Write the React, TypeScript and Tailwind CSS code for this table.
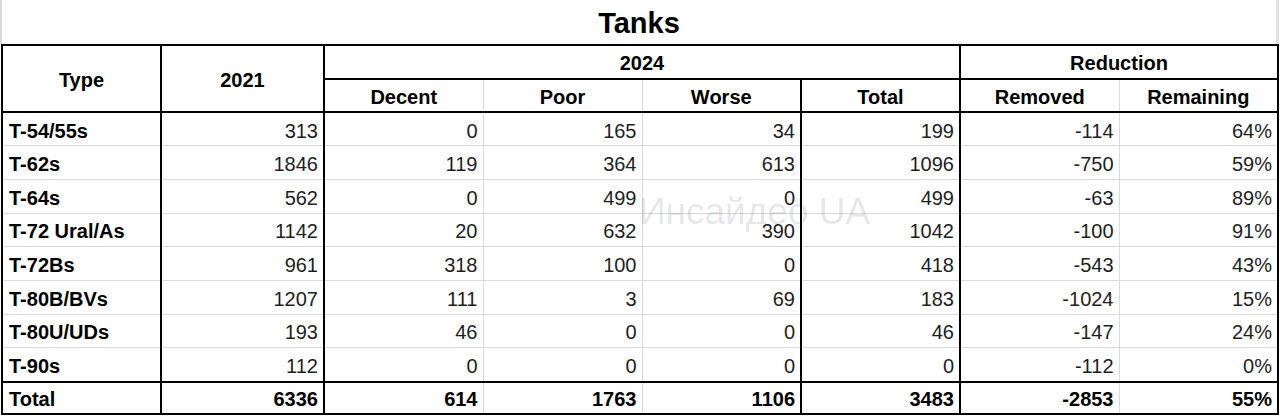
import React from 'react'

type Row = { type: string; y2021: number; decent: number; poor: number; worse: number; total: number; removed: number; remaining: string }

const rows: Row[] = [
  { type: 'T-54/55s', y2021: 313, decent: 0, poor: 165, worse: 34, total: 199, removed: -114, remaining: '64%' },
  { type: 'T-62s', y2021: 1846, decent: 119, poor: 364, worse: 613, total: 1096, removed: -750, remaining: '59%' },
  { type: 'T-64s', y2021: 562, decent: 0, poor: 499, worse: 0, total: 499, removed: -63, remaining: '89%' },
  { type: 'T-72 Ural/As', y2021: 1142, decent: 20, poor: 632, worse: 390, total: 1042, removed: -100, remaining: '91%' },
  { type: 'T-72Bs', y2021: 961, decent: 318, poor: 100, worse: 0, total: 418, removed: -543, remaining: '43%' },
  { type: 'T-80B/BVs', y2021: 1207, decent: 111, poor: 3, worse: 69, total: 183, removed: -1024, remaining: '15%' },
  { type: 'T-80U/UDs', y2021: 193, decent: 46, poor: 0, worse: 0, total: 46, removed: -147, remaining: '24%' },
  { type: 'T-90s', y2021: 112, decent: 0, poor: 0, worse: 0, total: 0, removed: -112, remaining: '0%' },
]

const thick = 'border-r-2 border-r-black'
const thin = 'border-r border-r-[#dadada]'

export default function App() {
  return (
    <div className="relative w-[1280px] h-[416px] bg-white overflow-hidden" style={{ fontFamily: '"Liberation Sans", Arial, sans-serif' }}>
      {/* Title */}
      <div className="h-[44px] flex justify-center border-l-[2px] border-l-[#d6d6d6] border-r-[3px] border-r-[#e2e2e2] mr-[1px]">
        <h1 className="text-[29px] font-bold leading-[44px] pt-[1px] text-black">Tanks</h1>
      </div>

      <table className="ml-[1px] w-[1276px] table-fixed border-collapse text-[20px] leading-[23px]">
        <colgroup>
          <col className="w-[159px]" />
          <col className="w-[163px]" />
          <col className="w-[159px]" />
          <col className="w-[159px]" />
          <col className="w-[159px]" />
          <col className="w-[159px]" />
          <col className="w-[159px]" />
          <col className="w-[159px]" />
        </colgroup>
        <thead className="font-bold text-black">
          <tr className="h-[33.5px]">
            <th rowSpan={2} className={`border-2 border-black text-center align-middle pt-[3px] ${thick}`}>Type</th>
            <th rowSpan={2} className={`border-t-2 border-b-2 border-black text-center align-middle pt-[3px] ${thick}`}>2021</th>
            <th colSpan={4} className={`border-t-2 border-b-2 border-black text-center align-middle pt-[4px] ${thick}`}>2024</th>
            <th colSpan={2} className={`border-t-2 border-b-2 border-black text-center align-middle pt-[4px] ${thick}`}>Reduction</th>
          </tr>
          <tr className="h-[33.5px]">
            <th className={`border-b-2 border-b-black text-center align-middle pt-[4px] ${thin}`}>Decent</th>
            <th className={`border-b-2 border-b-black text-center align-middle pt-[4px] ${thin}`}>Poor</th>
            <th className={`border-b-2 border-b-black text-center align-middle pt-[4px] ${thick}`}>Worse</th>
            <th className={`border-b-2 border-b-black text-center align-middle pt-[4px] ${thick}`}>Total</th>
            <th className={`border-b-2 border-b-black text-center align-middle pt-[4px] ${thin}`}>Removed</th>
            <th className={`border-b-2 border-b-black text-center align-middle pt-[4px] ${thick}`}>Remaining</th>
          </tr>
        </thead>
        <tbody className="text-[#1e1e1e]">
          {rows.map((r, i) => {
            const bottom = i === rows.length - 1 ? 'border-b-2 border-b-black' : 'border-b border-b-[#dadada]'
            const num = `text-right pr-[5px] align-middle pt-[4px] ${bottom}`
            return (
              <tr key={r.type} className="h-[33.7px]">
                <td className={`border-l-2 border-l-black font-bold text-black text-left pl-[6px] align-middle pt-[4px] ${bottom} ${thick}`}>{r.type}</td>
                <td className={`${num} ${thick}`}>{r.y2021}</td>
                <td className={`${num} ${thin}`}>{r.decent}</td>
                <td className={`${num} ${thin}`}>{r.poor}</td>
                <td className={`${num} ${thick}`}>{r.worse}</td>
                <td className={`${num} ${thick}`}>{r.total}</td>
                <td className={`${num} ${thin}`}>{r.removed}</td>
                <td className={`${num} ${thick}`}>{r.remaining}</td>
              </tr>
            )
          })}
          <tr className="h-[32.5px] font-bold text-black">
            <td className={`border-l-2 border-l-black border-b-2 border-b-black text-left pl-[6px] align-middle pt-[4px] ${thick}`}>Total</td>
            <td className={`border-b-2 border-b-black text-right pr-[5px] align-middle pt-[4px] ${thick}`}>6336</td>
            <td className={`border-b-2 border-b-black text-right pr-[5px] align-middle pt-[4px] ${thin}`}>614</td>
            <td className={`border-b-2 border-b-black text-right pr-[5px] align-middle pt-[4px] ${thin}`}>1763</td>
            <td className={`border-b-2 border-b-black text-right pr-[5px] align-middle pt-[4px] ${thick}`}>1106</td>
            <td className={`border-b-2 border-b-black text-right pr-[5px] align-middle pt-[4px] ${thick}`}>3483</td>
            <td className={`border-b-2 border-b-black text-right pr-[5px] align-middle pt-[4px] ${thin}`}>-2853</td>
            <td className={`border-b-2 border-b-black text-right pr-[5px] align-middle pt-[4px] ${thick}`}>55%</td>
          </tr>
        </tbody>
      </table>

      {/* Watermark */}
      <div className="absolute left-[639px] top-[193px] text-[37px] leading-none text-black/10 pointer-events-none select-none whitespace-nowrap">
        Инсайдео UA
      </div>
    </div>
  )
}
